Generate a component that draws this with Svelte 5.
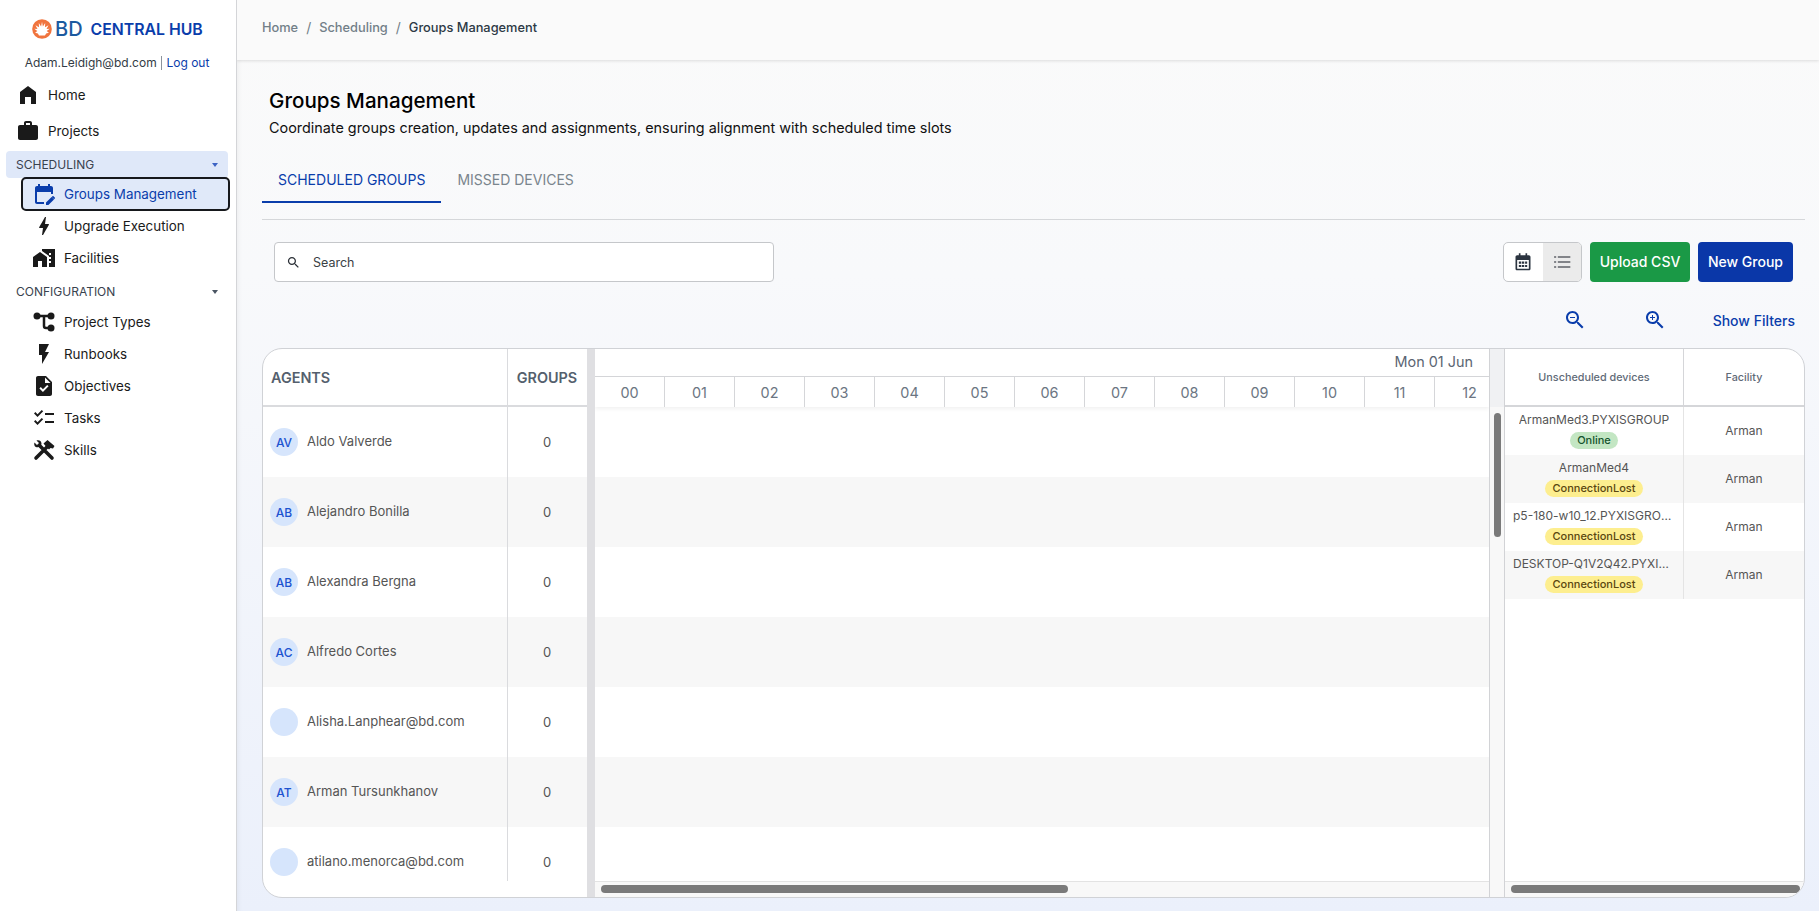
<script>
  const agents = [
    { initials: 'AV', name: 'Aldo Valverde' },
    { initials: 'AB', name: 'Alejandro Bonilla' },
    { initials: 'AB', name: 'Alexandra Bergna' },
    { initials: 'AC', name: 'Alfredo Cortes' },
    { initials: '', name: 'Alisha.Lanphear@bd.com' },
    { initials: 'AT', name: 'Arman Tursunkhanov' },
    { initials: '', name: 'atilano.menorca@bd.com' }
  ];
  const hours = ['00', '01', '02', '03', '04', '05', '06', '07', '08', '09', '10', '11', '12'];
  const devices = [
    { name: 'ArmanMed3.PYXISGROUP', status: 'Online' },
    { name: 'ArmanMed4', status: 'ConnectionLost' },
    { name: 'p5-180-w10_12.PYXISGROUP', status: 'ConnectionLost' },
    { name: 'DESKTOP-Q1V2Q42.PYXISGROUP', status: 'ConnectionLost' }
  ];
</script>

<div class="app">
  <aside class="sidebar">
    <div class="logo">
      <svg width="20" height="20" viewBox="0 0 20 20">
        <circle cx="10" cy="10" r="9.8" fill="#f0743e" />
        <path fill="#fff" d="M10 2.800 10.900 7.500l2.300-3.600-.2 4.300 3.500-2-2 3.700 3.200-.2-3 2.400 2.200 1.700-2.800.6-1.100 2.100H7l-1.100-2.100-2.800-.6 2.200-1.700-3-2.400 3.200.2-2-3.700 3.500 2-.2-4.300 2.300 3.600z" />
      </svg>
      <span class="bd">BD</span>
      <span class="hub">CENTRAL HUB</span>
    </div>
    <div class="user">Adam.Leidigh@bd.com <span class="pipe"></span> <span class="logout">Log out</span></div>

    <nav>
      <div class="item top">
        <svg viewBox="0 0 24 24" width="24" height="24"><path d="M12 3 4 9v12h5v-7h6v7h5V9z" /></svg>
        <span>Home</span>
      </div>
      <div class="item top">
        <svg viewBox="0 0 24 24" width="24" height="24"><path d="M20 6h-4V4c0-1.110-.89-2-2-2h-4c-1.110 0-2 .89-2 2v2H4c-1.110 0-1.990.89-1.990 2L2 19c0 1.110.89 2 2 2h16c1.110 0 2-.89 2-2V8c0-1.110-.89-2-2-2zm-6 0h-4V4h4v2z" /></svg>
        <span>Projects</span>
      </div>

      <div class="section open">
        <span>SCHEDULING</span>
        <i class="caret"></i>
      </div>
      <div class="item sub active">
        <svg viewBox="0 0 24 24" width="24" height="24"><path d="M5 10h14v2h2V6c0-1.100-.9-2-2-2h-1V2h-2v2H8V2H6v2H5c-1.110 0-1.990.9-1.990 2L3 20c0 1.100.89 2 2 2h7v-2H5z" /><path d="M14 20.600V23h2.400l5.600-5.600-2.400-2.400zM22.800 16.500c.3-.3.3-.7 0-1l-1.300-1.300c-.3-.3-.7-.3-1 0l-.7.700 2.300 2.300z" /></svg>
        <span>Groups Management</span>
      </div>
      <div class="item sub">
        <svg viewBox="0 0 24 24" width="24" height="24"><path d="M11 21h-1l1-7H7.500c-.58 0-.57-.32-.38-.66.19-.34.05-.08.07-.12C8.480 10.940 10.420 7.540 13 3h1l-1 7h3.500c.49 0 .56.33.47.51l-.07.15C12.960 17.550 11 21 11 21z" /></svg>
        <span>Upgrade Execution</span>
      </div>
      <div class="item sub">
        <svg viewBox="0 0 24 24" width="24" height="24"><path d="M1 11v10h5v-6h4v6h5V11L8 6z" /><path d="M10 3v1.970l7 5V11h2v2h-2v2h2v2h-2v4h6V3H10zm9 6h-2V7h2v2z" /></svg>
        <span>Facilities</span>
      </div>

      <div class="section config">
        <span>CONFIGURATION</span>
        <i class="caret"></i>
      </div>
      <div class="item sub">
        <svg viewBox="0 0 24 24" width="24" height="24"><circle cx="5" cy="6" r="3.500" /><circle cx="19" cy="6" r="3.500" /><circle cx="19" cy="18" r="3.500" /><path d="M5 6h14M12 6v10q0 2 2 2h5" fill="none" stroke="currentColor" stroke-width="2.500" /></svg>
        <span>Project Types</span>
      </div>
      <div class="item sub">
        <svg viewBox="0 0 24 24" width="24" height="24"><path d="M7 2v11h3v9l7-12h-4l4-8z" /></svg>
        <span>Runbooks</span>
      </div>
      <div class="item sub">
        <svg viewBox="0 0 24 24" width="24" height="24"><path d="M14 2H6c-1.100 0-1.990.9-1.990 2L4 20c0 1.100.89 2 1.990 2H18c1.100 0 2-.9 2-2V8l-6-6zm-3.060 16L7.400 14.460l1.410-1.410 2.120 2.120 4.240-4.240 1.410 1.410L10.940 18zM13 9V3.500L18.500 9H13z" /></svg>
        <span>Objectives</span>
      </div>
      <div class="item sub">
        <svg viewBox="0 0 24 24" width="24" height="24"><path d="M22 7h-9v2h9V7zm0 8h-9v2h9v-2zM5.540 11 2 7.460l1.410-1.410 2.120 2.120 4.240-4.240 1.410 1.410L5.540 11zm0 8L2 15.460l1.410-1.410 2.120 2.120 4.240-4.240 1.410 1.410L5.540 19z" /></svg>
        <span>Tasks</span>
      </div>
      <div class="item sub">
        <svg viewBox="0 0 24 24" width="24" height="24"><path d="M4 20 16 8M20 20 8 8" fill="none" stroke="currentColor" stroke-width="3.600" stroke-linecap="round" /><path d="m11.500 5.500 4-3.500 7 6-1.500 2.500-2.500-.5-1.500 1.500-3-3z" /><path d="M2.500 4.500 5 7l2-2-2.500-2.500C6.500 1.500 9.500 2.500 9.500 5.500c0 2.800-3.200 4.700-5.700 3.500C2.300 8.200 1.800 6 2.500 4.500z" /></svg>
        <span>Skills</span>
      </div>
    </nav>
  </aside>

  <main class="main">
    <header class="crumbs">
      <span>Home</span><i>/</i><span>Scheduling</span><i>/</i><b>Groups Management</b>
    </header>

    <div class="content">
      <h1>Groups Management</h1>
      <p class="lead">Coordinate groups creation, updates and assignments, ensuring alignment with scheduled time slots</p>

      <div class="tabs">
        <div class="tab current">SCHEDULED GROUPS</div>
        <div class="tab">MISSED DEVICES</div>
      </div>

      <div class="toolbar">
        <div class="search">
          <svg viewBox="0 0 24 24" width="15" height="15"><path d="M15.500 14h-.79l-.28-.27C15.410 12.590 16 11.110 16 9.500 16 5.910 13.090 3 9.500 3S3 5.910 3 9.500 5.910 16 9.500 16c1.610 0 3.090-.59 4.230-1.570l.27.28v.79l5 4.990L20.490 19l-4.990-5zm-6 0C7.010 14 5 11.990 5 9.500S7.010 5 9.500 5 14 7.010 14 9.500 11.990 14 9.500 14z" /></svg>
          <span>Search</span>
        </div>
        <div class="spacer"></div>
        <div class="toggle">
          <div class="toggle-btn">
            <svg viewBox="0 0 24 24" width="20" height="20" fill="#2b3440"><path fill-rule="evenodd" d="M7 1.500h2V4h6V1.500h2V4h2c1.100 0 2 .9 2 2v14c0 1.100-.9 2-2 2H5c-1.100 0-2-.9-2-2V6c0-1.100.9-2 2-2h2zM5 9.500V20h14V9.500zM7 11.500h3v2.500H7zM10.800 11.500h2.700v2.500h-2.700zM14.500 11.500H17v2.500h-2.500zM7 15.500h3V18H7zM10.800 15.500h2.700V18h-2.700zM14.500 15.500H17V18h-2.500z" /></svg>
          </div>
          <div class="toggle-btn selected">
            <svg viewBox="0 0 24 24" width="20" height="20" fill="#6d7076"><rect x="2.500" y="5" width="2.500" height="2" /><rect x="7" y="5" width="15" height="2" /><rect x="2.500" y="11" width="2.500" height="2" /><rect x="7" y="11" width="15" height="2" /><rect x="2.500" y="17" width="2.500" height="2" /><rect x="7" y="17" width="15" height="2" /></svg>
          </div>
        </div>
        <button class="btn green">Upload CSV</button>
        <button class="btn blue">New Group</button>
      </div>

      <div class="filters">
        <svg viewBox="0 0 24 24" width="24" height="24"><path d="M15.500 14h-.79l-.28-.27C15.410 12.590 16 11.110 16 9.500 16 5.910 13.090 3 9.500 3S3 5.910 3 9.500 5.910 16 9.500 16c1.610 0 3.090-.59 4.230-1.570l.27.28v.79l5 4.990L20.490 19l-4.990-5zm-6 0C7.010 14 5 11.990 5 9.500S7.010 5 9.500 5 14 7.010 14 9.500 11.990 14 9.500 14z" /><path d="M7 9h5v1H7z" /></svg>
        <svg class="zoom-in" viewBox="0 0 24 24" width="24" height="24"><path d="M15.500 14h-.79l-.28-.27C15.410 12.590 16 11.110 16 9.500 16 5.910 13.090 3 9.500 3S3 5.910 3 9.500 5.910 16 9.500 16c1.610 0 3.090-.59 4.230-1.570l.27.28v.79l5 4.990L20.490 19l-4.990-5zm-6 0C7.010 14 5 11.990 5 9.500S7.010 5 9.500 5 14 7.010 14 9.500 11.990 14 9.500 14z" /><path d="M12 10h-2v2H9v-2H7V9h2V7h1v2h2v1z" /></svg>
        <span>Show Filters</span>
      </div>

      <section class="board">
        <div class="agents">
          <div class="agents-head">
            <div class="col-name">AGENTS</div>
            <div class="col-groups">GROUPS</div>
          </div>
          <div class="agents-body">
            {#each agents as agent}
              <div class="agent-row">
                <div class="col-name">
                  <span class="avatar">{agent.initials}</span>
                  <span class="agent-name">{agent.name}</span>
                </div>
                <div class="col-groups">0</div>
              </div>
            {/each}
          </div>
        </div>

        <div class="splitter"></div>

        <div class="timeline">
          <div class="date">Mon 01 Jun</div>
          <div class="hours">
            {#each hours as hour}
              <div class="hour">{hour}</div>
            {/each}
          </div>
          <div class="lanes">
            {#each agents as agent}
              <div class="lane"></div>
            {/each}
          </div>
          <div class="hbar"><div class="thumb timeline-thumb"></div></div>
        </div>

        <div class="gutter">
          <div class="gutter-top"></div>
          <div class="vthumb"></div>
        </div>

        <div class="devices">
          <div class="devices-head">
            <div class="col-device">Unscheduled devices</div>
            <div class="col-facility">Facility</div>
          </div>
          <div class="devices-body">
            {#each devices as device}
              <div class="device-row">
                <div class="col-device">
                  <div class="device-name">{device.name}</div>
                  <span class="badge" class:online={device.status === 'Online'}>{device.status}</span>
                </div>
                <div class="col-facility">Arman</div>
              </div>
            {/each}
          </div>
          <div class="hbar"><div class="thumb devices-thumb"></div></div>
        </div>
      </section>
    </div>
  </main>
</div>

<style>
  :global(body) {
    margin: 0;
    font-family: Inter, "Liberation Sans", sans-serif;
  }

  .app {
    display: flex;
    height: 911px;
    overflow: hidden;
    color: #111;
  }

  .sidebar {
    width: 237px;
    flex: none;
    background: #fff;
    border-right: 1px solid #d4d5d8;
    box-sizing: border-box;
    padding-top: 18px;
    z-index: 2;
  }

  .logo {
    display: flex;
    align-items: center;
    height: 22px;
    padding-left: 32px;
    gap: 2px;
  }
  .bd {
    color: #1c5a9f;
    font-size: 20px;
    font-weight: 500;
    margin-left: 1px;
  }
  .hub {
    color: #0a3dab;
    font-size: 15.8px;
    font-weight: 600;
    margin-left: 6px;
  }

  .user {
    text-align: center;
    font-size: 12px;
    color: #333b45;
    margin-top: 14px;
    line-height: 18px;
    padding-right: 2px;
  }
  .pipe {
    display: inline-block;
    width: 1px;
    height: 14px;
    background: #8c939c;
    vertical-align: -3px;
    margin: 0 1px;
  }
  .logout {
    color: #0a3dab;
  }

  nav {
    margin-top: 5px;
  }

  .item {
    display: flex;
    align-items: center;
    font-size: 13.4px;
    color: #1a1a1a;
  }
  .item svg {
    fill: currentColor;
    flex: none;
  }
  .top {
    height: 36px;
    padding-left: 16px;
    gap: 8px;
  }
  .sub {
    height: 32px;
    padding-left: 32px;
    gap: 8px;
  }
  .active {
    box-sizing: border-box;
    height: 34px;
    margin: 0 6px -1px 21px;
    padding-left: 9px;
    background: #e0e9f9;
    border: 2px solid #16181c;
    border-radius: 5px;
    color: #0a3dab;
  }

  .section {
    display: flex;
    align-items: center;
    justify-content: space-between;
    height: 27px;
    margin: 2px 8px 0 6px;
    padding: 0 10px;
    font-size: 12px;
    color: #39424e;
    border-radius: 4px;
  }
  .section.open {
    background: #dfe8f9;
    margin-bottom: -1px;
  }
  .section.config {
    margin: 4px 8px 1px 6px;
  }
  .caret {
    width: 0;
    height: 0;
    border-left: 3.5px solid transparent;
    border-right: 3.5px solid transparent;
    border-top: 4px solid #4a5563;
  }
  .open .caret {
    border-top-color: #3d63c4;
  }

  .main {
    flex: 1;
    min-width: 0;
    display: flex;
    flex-direction: column;
    background: linear-gradient(180deg, #fafafa 0%, #f8f9fb 30%, #ebf0fb 100%);
    box-shadow: inset 6px 0 6px -6px rgba(0, 0, 0, 0.08);
  }

  .crumbs {
    height: 60px;
    flex: none;
    box-sizing: border-box;
    padding: 0 0 6px 25px;
    display: flex;
    align-items: center;
    font-size: 12.8px;
    font-weight: 500;
    color: #727f88;
    background: #fafafa;
    box-shadow: 0 1px 3px rgba(0, 0, 0, 0.12);
  }
  .crumbs i {
    font-style: normal;
    font-weight: 400;
    margin: 0 8px;
    font-size: 14px;
  }
  .crumbs b {
    font-weight: 500;
    color: #2c3945;
  }

  .content {
    padding: 0 15px 0 25px;
    display: flex;
    flex-direction: column;
    flex: 1;
    min-height: 0;
  }

  h1 {
    margin: 29px 0 0 7px;
    font-size: 20.6px;
    font-weight: 500;
    line-height: 24px;
    color: #000;
  }
  .lead {
    margin: 5px 0 0 7px;
    font-size: 14.4px;
    line-height: 20px;
    color: #111;
  }

  .tabs {
    display: flex;
    margin-top: 23px;
    height: 59px;
    box-sizing: border-box;
    border-bottom: 1px solid #d5d7da;
    margin-right: -1px;
  }
  .tab {
    height: 42px;
    line-height: 37px;
    box-sizing: border-box;
    padding: 0 16px;
    font-size: 14px;
    color: #7a858d;
  }
  .tab.current {
    color: #0a3dab;
    border-bottom: 2px solid #0a3dab;
  }

  .toolbar {
    display: flex;
    align-items: center;
    margin-top: 22px;
    padding: 0 11px 0 12px;
    gap: 8px;
  }
  .search {
    width: 500px;
    height: 40px;
    box-sizing: border-box;
    background: #fff;
    border: 1px solid #c5c7ca;
    border-radius: 4px;
    display: flex;
    align-items: center;
    padding-left: 11px;
    gap: 12px;
    font-size: 12.5px;
    color: #3a3f45;
  }
  .search svg {
    fill: #2a2f36;
  }
  .spacer {
    flex: 1;
  }

  .toggle {
    display: flex;
    height: 40px;
    width: 79px;
    box-sizing: border-box;
    border: 1px solid #c5c7ca;
    border-radius: 5px;
    overflow: hidden;
    background: #fff;
  }
  .toggle-btn {
    flex: 1;
    display: flex;
    align-items: center;
    justify-content: center;
  }
  .toggle-btn.selected {
    background: #ebebeb;
  }

  .btn {
    height: 40px;
    border: none;
    border-radius: 4px;
    color: #fff;
    font: 500 14px/38px Inter, "Liberation Sans", sans-serif;
    padding: 0 0 1px;
  }
  .green {
    width: 100px;
    background: #1a9946;
  }
  .blue {
    width: 95px;
    background: #0a37a8;
  }

  .filters {
    display: flex;
    align-items: center;
    justify-content: flex-end;
    margin-top: 27px;
    height: 22px;
    padding-right: 9px;
    color: #0a3dab;
    font-size: 14px;
    font-weight: 500;
  }
  .filters svg {
    fill: #0a3dab;
  }
  .zoom-in {
    margin-left: 56px;
  }
  .filters span {
    margin-left: 46px;
  }

  .board {
    display: flex;
    flex: none;
    margin-top: 17px;
    height: 550px;
    box-sizing: border-box;
    border: 1px solid #d0d2d6;
    border-radius: 20px;
    background: #fff;
    overflow: hidden;
    margin-right: -1px;
  }

  .agents {
    width: 324px;
    flex: none;
    display: flex;
    flex-direction: column;
  }
  .agents-head {
    display: flex;
    height: 58px;
    flex: none;
    box-sizing: border-box;
    border-bottom: 2px solid #dadbde;
    color: #545f6d;
    font-size: 14.4px;
    font-weight: 600;
  }
  .agents-head .col-name {
    padding-left: 8px;
  }
  .col-name {
    width: 245px;
    flex: none;
    box-sizing: border-box;
    display: flex;
    align-items: center;
    border-right: 1px solid #dadbde;
  }
  .col-groups {
    flex: 1;
    display: flex;
    align-items: center;
    justify-content: center;
    padding-right: 1px;
  }
  .agents-body {
    height: 474px;
    flex: none;
    overflow: hidden;
  }
  .agent-row {
    display: flex;
    height: 70px;
    font-size: 13px;
    color: #555;
  }
  .agent-row:nth-child(even) {
    background: #f7f7f7;
  }
  .agent-row .col-name {
    padding-left: 7px;
    gap: 9px;
  }
  .agent-name {
    margin-top: -2px;
  }
  .avatar {
    width: 28px;
    height: 28px;
    border-radius: 50%;
    background: #d6e5fc;
    color: #1c53d0;
    font-size: 12px;
    font-weight: 500;
    display: flex;
    align-items: center;
    justify-content: center;
    flex: none;
  }

  .splitter {
    width: 8px;
    flex: none;
    background: #dfdfe2;
  }

  .timeline {
    width: 894px;
    flex: none;
    display: flex;
    flex-direction: column;
    overflow: hidden;
  }
  .date {
    height: 28px;
    flex: none;
    box-sizing: border-box;
    border-bottom: 1px solid #d5d6d9;
    text-align: right;
    padding-right: 16px;
    font-size: 14.4px;
    line-height: 26px;
    color: #5b6572;
  }
  .hours {
    display: flex;
    height: 30px;
    flex: none;
    color: #6b7582;
    font-size: 14.4px;
    box-shadow: 0 2px 4px rgba(0, 0, 0, 0.06);
    position: relative;
  }
  .hour {
    width: 70px;
    flex: none;
    box-sizing: border-box;
    border-right: 1px solid #d5d6d9;
    text-align: center;
    line-height: 31px;
  }
  .lanes {
    height: 474px;
    flex: none;
    overflow: hidden;
  }
  .lane {
    height: 70px;
  }
  .lane:nth-child(even) {
    background: #f7f7f7;
  }

  .hbar {
    height: 16px;
    flex: none;
    box-sizing: border-box;
    background: #f8f8f8;
    border-top: 1px solid #e3e3e3;
    padding: 3px 4px 0 6px;
  }
  .thumb {
    height: 8px;
    border-radius: 4px;
    background: #7a7a7a;
  }
  .timeline-thumb {
    width: 467px;
  }

  .gutter {
    width: 16px;
    flex: none;
    box-sizing: border-box;
    background: #f8f8f8;
    border-left: 1px solid #d2d3d6;
    border-right: 1px solid #d2d3d6;
    display: flex;
    flex-direction: column;
    align-items: center;
  }
  .gutter-top {
    height: 58px;
    flex: none;
    width: 100%;
    background: #f0f1f3;
    margin-bottom: 6px;
  }
  .vthumb {
    width: 7px;
    height: 124px;
    border-radius: 4px;
    background: #7a7a7a;
  }

  .devices {
    flex: 1;
    min-width: 0;
    display: flex;
    flex-direction: column;
  }
  .devices-head {
    display: flex;
    height: 58px;
    flex: none;
    box-sizing: border-box;
    border-bottom: 2px solid #d5d6d9;
    color: #5f6a77;
    font-size: 10.8px;
    font-weight: 500;
  }
  .col-device {
    width: 179px;
    flex: none;
    box-sizing: border-box;
    border-right: 1px solid #d5d6d9;
    display: flex;
    flex-direction: column;
    align-items: center;
    justify-content: center;
  }
  .col-facility {
    flex: 1;
    display: flex;
    align-items: center;
    justify-content: center;
    padding-bottom: 2px;
  }
  .devices-head .col-facility {
    padding-bottom: 0;
  }
  .devices-body {
    height: 474px;
    flex: none;
  }
  .device-row {
    display: flex;
    height: 48px;
    font-size: 12px;
    color: #555;
  }
  .device-row:nth-child(even) {
    background: #f7f7f7;
  }
  .device-row .col-device {
    border-right-color: #e4e4e4;
    padding: 0 8px;
  }
  .device-name {
    max-width: 100%;
    white-space: nowrap;
    overflow: hidden;
    text-overflow: ellipsis;
    line-height: 15px;
    margin: -2px 0 5px;
  }
  .badge {
    height: 17px;
    line-height: 17px;
    padding: 0 7px;
    border-radius: 9px;
    font-size: 11px;
    font-weight: 500;
    background: #fdee8f;
    color: #5a4610;
  }
  .badge.online {
    background: #c3e6c3;
    color: #14532d;
  }
  .devices-thumb {
    width: 100%;
  }
</style>
